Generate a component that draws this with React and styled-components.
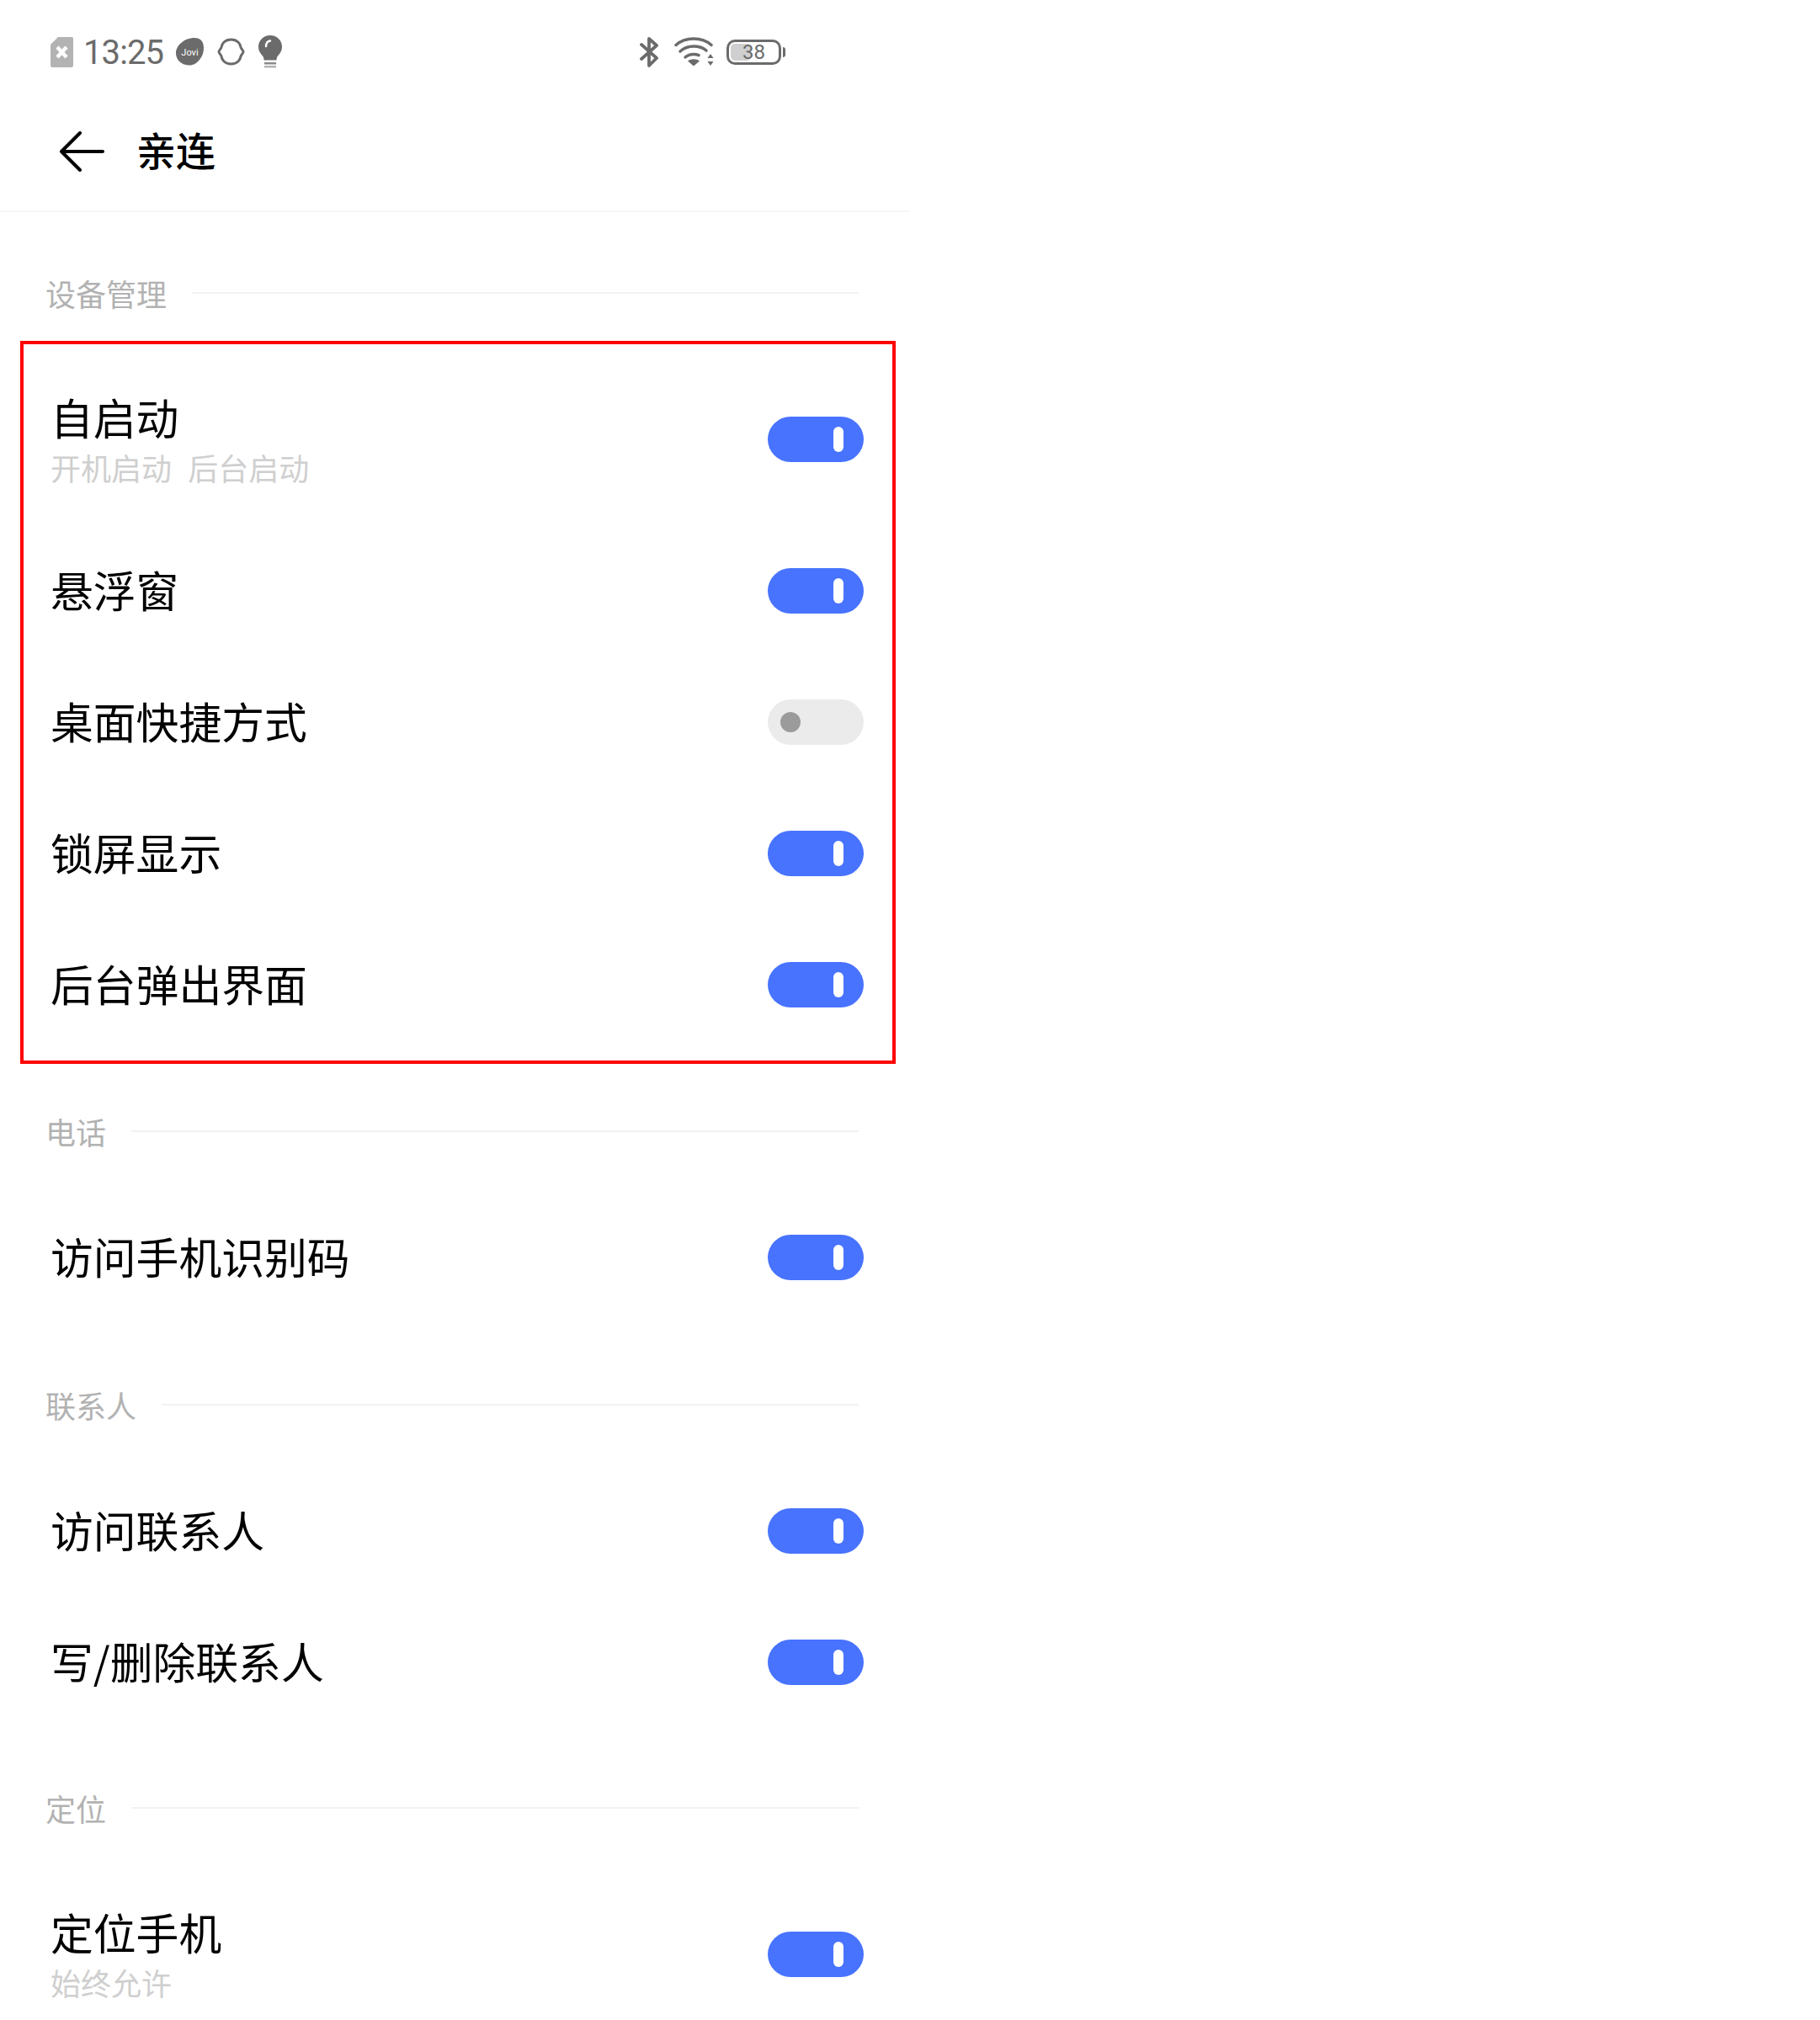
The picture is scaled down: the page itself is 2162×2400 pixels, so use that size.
import React from "react";
import styled, { createGlobalStyle } from "styled-components";

const GlobalStyle = createGlobalStyle`
  html, body {
    margin: 0;
    padding: 0;
    background: #fff;
    font-family: "Noto Sans CJK SC", "Noto Sans", sans-serif;
  }
`;

const Page = styled.div`
  width: 2162px;
  height: 2400px;
  overflow: hidden;
  background: #fff;
`;

const Phone = styled.div`
  width: 1080px;
`;

const StatusBar = styled.div`
  height: 120px;
  box-sizing: border-box;
  padding: 3px 147px 0 60px;
  display: flex;
  align-items: center;
  justify-content: space-between;
  color: #6b6b6b;
`;

const StatusGroup = styled.div`
  display: flex;
  align-items: center;
  gap: ${(p) => p.$gap}px;
`;

const Clock = styled.span`
  font-family: Roboto, "Liberation Sans", sans-serif;
  font-size: 40px;
  line-height: 50px;
  margin: 2px 15px 0 12px;
  letter-spacing: -0.9px;
`;

const Battery = styled.div`
  position: relative;
  width: 65px;
  height: 30px;
  margin: 0 5px 0 -3px;
  border: 3px solid #6b6b6b;
  border-radius: 10px;
  box-sizing: border-box;
  display: flex;
  align-items: center;
  justify-content: center;
  font-family: Roboto, "Liberation Sans", sans-serif;
  font-size: 24px;
  color: #6b6b6b;

  &::before {
    content: "";
    position: absolute;
    left: 2px;
    top: 2px;
    bottom: 2px;
    width: 24px;
    background: #cfcfcf;
    border-radius: 5px;
  }

  &::after {
    content: "";
    position: absolute;
    right: -8px;
    top: 6px;
    width: 3px;
    height: 12px;
    background: #6b6b6b;
    border-radius: 0 3px 3px 0;
  }
`;

const BatteryLevel = styled.span`
  position: relative;
  line-height: 24px;
`;

const NavBar = styled.div`
  height: 132px;
  box-sizing: border-box;
  padding: 0 0 10px 70px;
  display: flex;
  align-items: center;
  gap: 38px;
  border-bottom: 2px solid #f6f6f6;
`;

const Title = styled.h1`
  margin: 0 0 6px;
  font-size: 47px;
  font-weight: 500;
  line-height: 60px;
  color: #000;
`;

const SectionHeader = styled.div`
  height: 144px;
  margin-top: ${(p) => p.$top}px;
  box-sizing: border-box;
  padding: 0 60px 0 54px;
  display: flex;
  align-items: center;
  gap: 30px;
`;

const SectionLabel = styled.span`
  font-size: 36px;
  line-height: 48px;
  color: #b2b2b2;
`;

const SectionLine = styled.div`
  flex: 1;
  height: 2px;
  background: #f2f2f2;
`;

const Highlight = styled.div`
  position: relative;
  margin-top: -15px;
  padding: 15px 0 16px;

  &::after {
    content: "";
    position: absolute;
    left: 24px;
    top: 0;
    bottom: 0;
    width: 1040px;
    box-sizing: border-box;
    border: 4px solid #ff0000;
    pointer-events: none;
  }
`;

const Row = styled.div`
  height: ${(p) => (p.$tall ? 204 : 156)}px;
  box-sizing: border-box;
  padding: 0 54px 0 60px;
  display: flex;
  align-items: center;
  justify-content: space-between;
`;

const RowText = styled.div`
  display: flex;
  flex-direction: column;
`;

const RowTitle = styled.span`
  font-size: 50.8px;
  line-height: 66px;
  color: #000;
  margin-top: -4px;
`;

const RowSub = styled.span`
  margin-top: 3px;
  font-size: 36px;
  line-height: 48px;
  color: #cfcfcf;
  white-space: pre;
  word-spacing: 1.5px;
`;

const Toggle = styled.div`
  width: 114px;
  height: 54px;
  border-radius: 27px;
  box-sizing: border-box;
  background: ${(p) => (p.$on ? "#4873ff" : "#ebebeb")};
  display: flex;
  align-items: center;
  justify-content: ${(p) => (p.$on ? "flex-end" : "flex-start")};
  padding: ${(p) => (p.$on ? "0 24px 0 0" : "0 0 0 15px")};
`;

const Knob = styled.div`
  width: ${(p) => (p.$on ? 12 : 24)}px;
  height: ${(p) => (p.$on ? 30 : 24)}px;
  border-radius: 12px;
  background: ${(p) => (p.$on ? "#fff" : "#9b9b9b")};
`;

function SimIcon() {
  return (
    <svg width="27" height="36" viewBox="0 0 27 36">
      <path d="M9 0h16a2 2 0 0 1 2 2v32a2 2 0 0 1-2 2H2a2 2 0 0 1-2-2V9z" fill="#b3b3b3" />
      <path d="M8 12l11 12M19 12L8 24" stroke="#fff" strokeWidth="4.5" fill="none" />
    </svg>
  );
}

function JoviIcon() {
  return (
    <svg width="33" height="33" viewBox="0 0 33 33">
      <path d="M0 18C0 9 10 0 22 0c7 0 11 4 11 12 0 5-1.500 10-5 14-3 4-8 7-13 6.500C6 32 0 26 0 18z" fill="#6b6b6b" />
      <text x="16.5" y="21" fontSize="11" textAnchor="middle" fill="#fff" fontFamily="Roboto, sans-serif">Jovi</text>
    </svg>
  );
}

function RingIcon() {
  return (
    <svg width="33" height="33" viewBox="0 0 33 33">
      <path
        d="M16.500 2C24 2 27.500 7 28 11C28.300 13 31 14.500 31 16.500C31 18.500 28.300 20 28 22C27.500 26 24 31 16.500 31C9 31 5.500 26 5 22C4.700 20 2 18.500 2 16.500C2 14.500 4.700 13 5 11C5.500 7 9 2 16.500 2Z"
        fill="none"
        stroke="#6b6b6b"
        strokeWidth="3"
      />
    </svg>
  );
}

function BulbIcon() {
  return (
    <svg width="28" height="39" viewBox="0 0 28 39">
      <path d="M14 0c8 0 14 6 14 13.500 0 5-2.500 8-5 11-1 1.300-1.500 3-1.500 5h-15c0-2-.5-3.700-1.500-5-2.500-3-5-6-5-11C0 6 6 0 14 0z" fill="#6b6b6b" />
      <path d="M9 13c0-3.500 2-6 5-6.500" stroke="#fff" strokeWidth="2.500" fill="none" strokeLinecap="round" />
      <rect x="7" y="32" width="14" height="2.500" fill="#8a8a8a" />
      <rect x="7" y="36" width="14" height="2.500" fill="#b3b3b3" />
    </svg>
  );
}

function BluetoothIcon() {
  return (
    <svg width="23" height="36" viewBox="0 0 23 36">
      <path d="M2 9l18 16-9 9V2l9 8L2 26" fill="none" stroke="#6b6b6b" strokeWidth="3.800" strokeLinecap="round" strokeLinejoin="round" />
    </svg>
  );
}

function WifiIcon() {
  return (
    <svg width="47" height="35" viewBox="0 0 47 35">
      <path d="M2 9.500C7.500 4.500 14 2 23 2s15.500 2.500 21 7.500" fill="none" stroke="#6b6b6b" strokeWidth="3.500" strokeLinecap="round" />
      <path d="M7 17c4.500-4 10-6 16-6s11.500 2 15 5" fill="none" stroke="#6b6b6b" strokeWidth="3.500" strokeLinecap="round" />
      <path d="M13 24c3-2.500 6-3.500 10-3.500 2 0 4 .3 6 1.200" fill="none" stroke="#6b6b6b" strokeWidth="3.500" strokeLinecap="round" />
      <path d="M16 28.500c2-1.500 4.500-2.200 7-2.200s5 .7 7 2.200l-7 6z" fill="#6b6b6b" />
      <path d="M43 20l3.500 5h-7zM43 34l-3.500-5h7z" fill="#6b6b6b" />
    </svg>
  );
}

function BackIcon() {
  return (
    <svg width="54" height="48" viewBox="0 0 54 48">
      <path d="M52 24H3M25 2L3 24l22 22" fill="none" stroke="#000" strokeWidth="4" strokeLinecap="round" strokeLinejoin="round" />
    </svg>
  );
}

function SettingRow({ title, sub, on = true }) {
  return (
    <Row $tall={Boolean(sub)}>
      <RowText>
        <RowTitle>{title}</RowTitle>
        {sub && <RowSub>{sub}</RowSub>}
      </RowText>
      <Toggle $on={on}>
        <Knob $on={on} />
      </Toggle>
    </Row>
  );
}

function Section({ label, top }) {
  return (
    <SectionHeader $top={top}>
      <SectionLabel>{label}</SectionLabel>
      <SectionLine />
    </SectionHeader>
  );
}

export default function App() {
  return (
    <Page>
      <GlobalStyle />
      <Phone>
        <StatusBar>
          <StatusGroup $gap={0}>
            <SimIcon />
            <Clock>13:25</Clock>
            <StatusGroup $gap={16}>
              <JoviIcon />
              <RingIcon />
              <BulbIcon />
            </StatusGroup>
          </StatusGroup>
          <StatusGroup $gap={18}>
            <BluetoothIcon />
            <WifiIcon />
            <Battery>
              <BatteryLevel>38</BatteryLevel>
            </Battery>
          </StatusGroup>
        </StatusBar>
        <NavBar>
          <BackIcon />
          <Title>亲连</Title>
        </NavBar>

        <Section label="设备管理" top={24} />
        <Highlight>
          <SettingRow title="自启动" sub="开机启动  后台启动" />
          <SettingRow title="悬浮窗" />
          <SettingRow title="桌面快捷方式" on={false} />
          <SettingRow title="锁屏显示" />
          <SettingRow title="后台弹出界面" />
        </Highlight>

        <Section label="电话" top={8} />
        <SettingRow title="访问手机识别码" />

        <Section label="联系人" top={25} />
        <SettingRow title="访问联系人" />
        <SettingRow title="写/删除联系人" />

        <Section label="定位" top={23} />
        <SettingRow title="定位手机" sub="始终允许" />
      </Phone>
    </Page>
  );
}
